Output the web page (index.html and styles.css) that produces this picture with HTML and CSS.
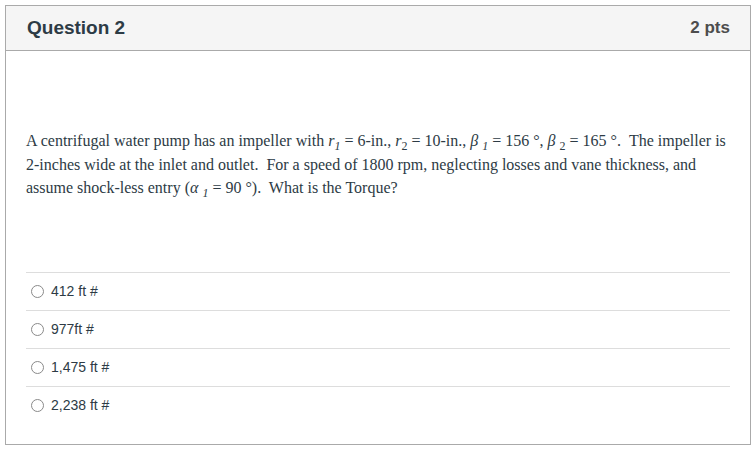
FILE: index.html
```html
<!DOCTYPE html>
<html>
<head>
<meta charset="utf-8">
<link rel="stylesheet" href="styles.css">
</head>
<body>
<div class="card">
  <div class="card-header">
    <h2 class="title">Question 2</h2>
    <div class="pts">2 pts</div>
  </div>
  <div class="card-body">
    <p class="qtext">A centrifugal water pump has an impeller with <i>r</i><sub><i>1</i></sub> = 6-in., <i>r</i><sub>2</sub> = 10-in., <i>β</i> <sub><i>1</i></sub> = 156 °, <i>β</i> <sub>2</sub> = 165 °.&nbsp; The impeller is 2-inches wide at the inlet and outlet.&nbsp; For a speed of 1800 rpm, neglecting losses and vane thickness, and assume shock-less entry (<i>α</i> <sub><i>1</i></sub> = 90 °).&nbsp; What is the Torque?</p>
    <div class="answers">
      <label class="answer"><span class="radio"></span><span class="atext">412 ft #</span></label>
      <label class="answer"><span class="radio"></span><span class="atext">977ft #</span></label>
      <label class="answer"><span class="radio"></span><span class="atext">1,475 ft #</span></label>
      <label class="answer"><span class="radio"></span><span class="atext">2,238 ft #</span></label>
    </div>
  </div>
</div>
</body>
</html>
```

FILE: styles.css
```css
html, body {
  margin: 0;
  padding: 0;
  background: #ffffff;
}
body {
  padding: 5px 0 0 5px;
}
.card {
  width: 746px;
  height: 440px;
  box-sizing: border-box;
  border: 1px solid #aaaaaa;
  background: #ffffff;
}
.card-header {
  height: 45px;
  box-sizing: border-box;
  background: #f5f5f5;
  border-bottom: 1px solid #aaaaaa;
  display: flex;
  align-items: center;
  justify-content: space-between;
  padding: 0 20px 0 21px;
}
.title {
  margin: 0;
  font-family: "Liberation Sans", Arial, sans-serif;
  font-size: 19px;
  font-weight: bold;
  color: #2d3b45;
}
.pts {
  font-family: "Liberation Sans", Arial, sans-serif;
  font-size: 17px;
  font-weight: bold;
  color: #4d4d4d;
}
.card-body {
  padding: 78px 20px 0 20px;
}
.qtext {
  margin: 0;
  font-family: "Liberation Serif", "Times New Roman", serif;
  font-size: 16px;
  line-height: 23.6px;
  color: #2d3b45;
}
.qtext sub {
  font-size: 12px;
  line-height: 1;
  vertical-align: -4px;
}
.answers {
  margin-top: 72px;
}
.answer {
  display: flex;
  align-items: center;
  height: 38px;
  box-sizing: border-box;
  border-top: 1px solid #dddddd;
  padding-left: 5px;
}
.radio {
  width: 13px;
  height: 13px;
  box-sizing: border-box;
  border: 1px solid #8a8a8a;
  border-radius: 50%;
  background: #ffffff;
  margin-right: 7px;
}
.atext {
  font-family: "Liberation Sans", Arial, sans-serif;
  font-size: 14px;
  color: #2d3b45;
}
```
